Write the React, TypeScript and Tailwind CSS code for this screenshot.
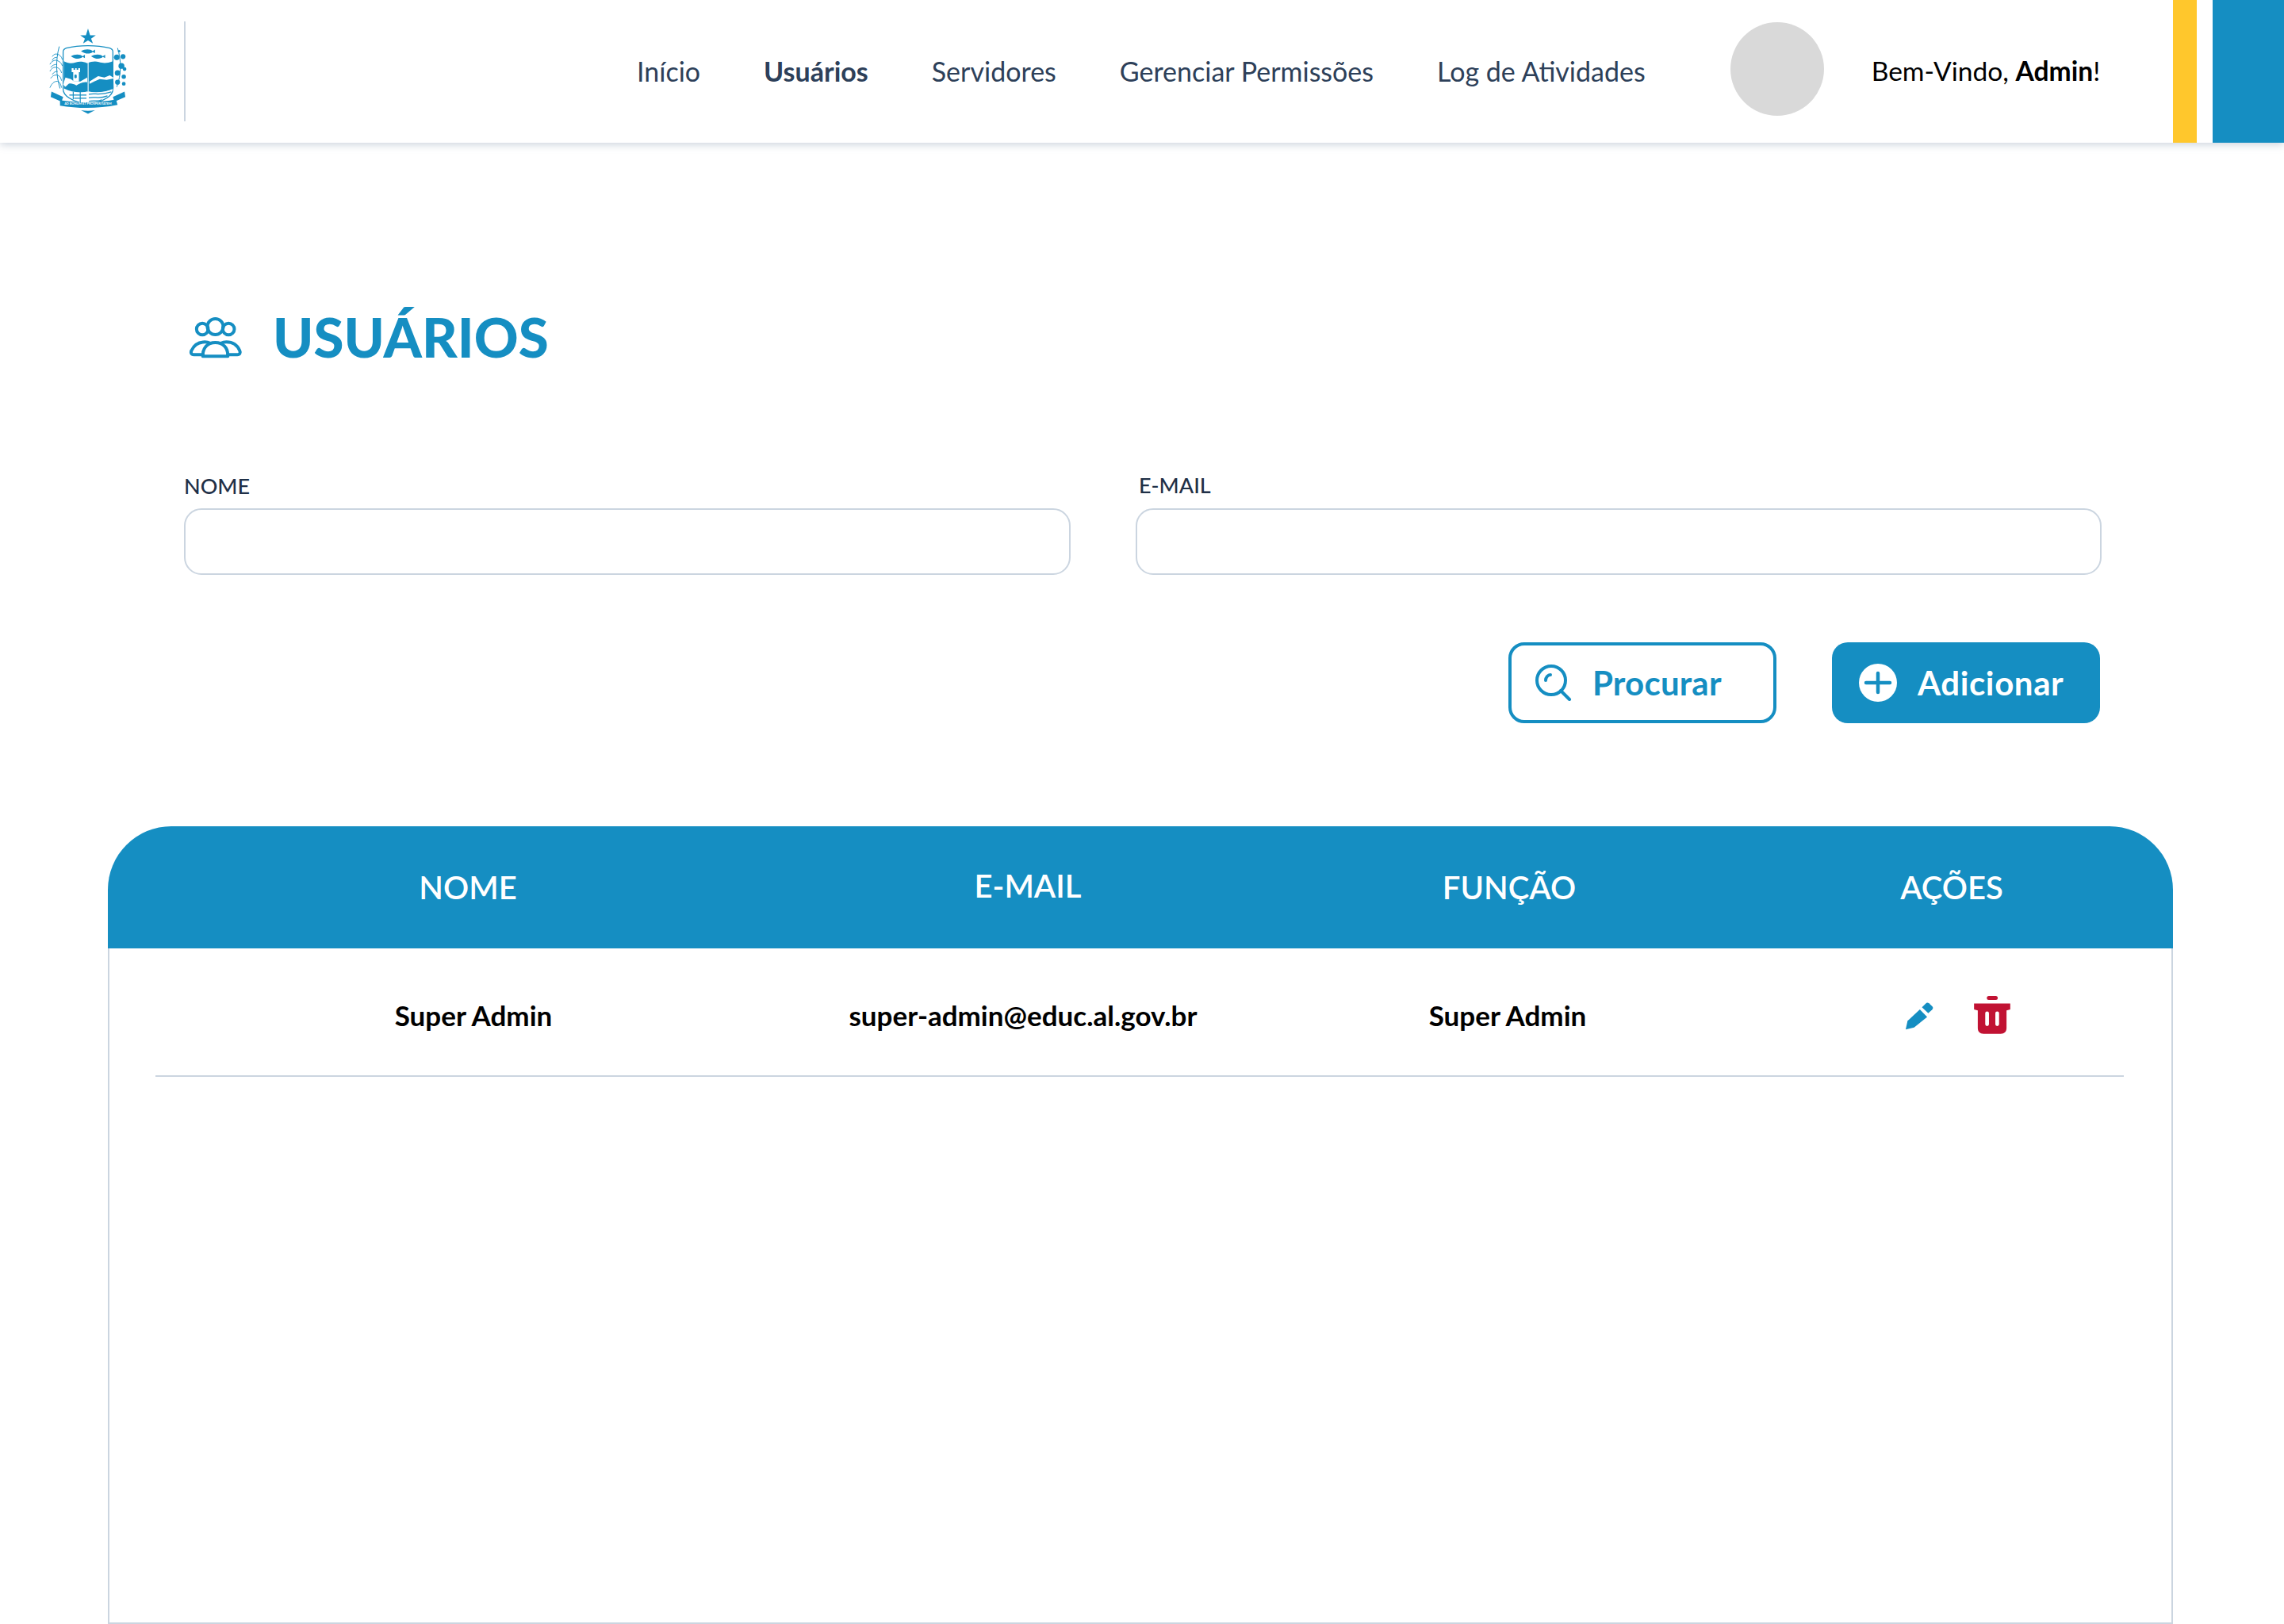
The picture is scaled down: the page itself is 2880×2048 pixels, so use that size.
const font = "font-['Lato','Liberation_Sans',sans-serif]";

function Crest() {
  return (
    <svg width="100" height="112" viewBox="58 34 102 112" fill="#158EC2" aria-hidden="true">
      {/* star */}
      <polygon points="110,35 112.700,43.500 120,43.500 114,48 116.300,54 110,50.300 103.700,54 106,48 100,43.500 107.300,43.500" />
      {/* shield outline */}
      <path d="M82 60c17-4 39-4 56 0 3 1 4 3 4 5v48c0 10-14 16-32 20-18-4-32-10-32-20V65c0-2 1-4 4-5z" fill="none" stroke="#158EC2" strokeWidth="1.300" />
      {/* fishes */}
      <path d="M101 64c5-3 12-3 15 0l3-2v4.500l-3-1.500c-3 3-10 3-15-1z" />
      <path d="M88 70.500c5-3 12-3 15 0l3-2V73l-3-1.500c-3 3-10 3-15-1z" />
      <path d="M114 70.500c5-3 12-3 15 0l3-2V73l-3-1.500c-3 3-10 3-15-1z" />
      {/* field */}
      <path d="M79 77c5 3 10 3 15 1.500s10-1 15 1c5-2 10-3 15-1.500s10 2 18-1l1 35c-10 5-22 6-33 4-11 2-21 1-31-4z" />
      {/* tower */}
      <path d="M89 86h2.400v2h2v-2h2v2h2v-2h2.400v5h-1.500v12h-7.300V91H89z" fill="#fff" />
      <rect x="92.500" y="94" width="3" height="5" rx="1.500" fill="#158EC2" />
      {/* hills */}
      <path d="M78 107l3-9 7 2 4 3 8 0 9-5v6c-6-1-10 2-14 4-4-2-7-3-10-2l-4 4z" fill="#fff" />
      <path d="M112 103l11-7 8 2 7-3 6 4-10 2-9-1-7 3-6 3z" fill="#fff" />
      {/* lower field */}
      <path d="M80 115c9 3 20 3 29 1v16c-12-3-25-8-29-17z" fill="#fff" />
      <path d="M111 116c11 2 22 1 31-3-3 9-17 15-31 19z" fill="#fff" />
      <path d="M111 119.500c8-2 13 2 29-3M111 124c8-2 13 2 24-2.500M111 128.500c8-2 10 1 17-2" fill="none" stroke="#158EC2" strokeWidth="1.300" />
      <path d="M86 120.500h22M92 124.500h16M91 116v10M100 116v14" fill="none" stroke="#158EC2" strokeWidth="1.200" />
      <rect x="109.600" y="77" width="1.100" height="55" fill="#fff" />
      {/* cane on the left */}
      <path d="M73 58c-5 18-4 38 1 54" fill="none" stroke="#158EC2" strokeWidth="1" />
      <path d="M71 68c-3-1-5 0-7 3M71 68c3 1 5 3 6 7M70 76c-3-1-7 1-9 5M70 76c3 1 6 3 7 7M70 85c-4-1-7 1-9 5M70 85c3 1 5 3 6 7M71 95c-4-1-7 1-9 4M71 95c3 1 4 3 5 7M72 103c-4-1-8 1-11 8M72 103c2 2 3 4 4 8M70 72c-3 0-5 1-6 4M70 81c-3 0-6 1-8 4M71 90c-3 0-5 1-7 4" fill="none" stroke="#158EC2" strokeWidth=".9" />
      {/* flowers on the right */}
      <path d="M148 60c5 16 5 34-1 50" fill="none" stroke="#158EC2" strokeWidth="1" />
      <circle cx="147" cy="72" r="3.600" />
      <circle cx="155" cy="71" r="3.200" />
      <circle cx="150" cy="64" r="1.600" />
      <circle cx="153" cy="83" r="3.800" />
      <circle cx="157" cy="87" r="2.400" />
      <circle cx="148" cy="92" r="3.600" />
      <circle cx="156" cy="97" r="2.800" />
      <circle cx="148" cy="104" r="3.200" />
      <circle cx="156" cy="106" r="2.400" />
      {/* ribbon */}
      <path d="M63 116l15 7-2 6-14-6z" />
      <path d="M157 116l-15 7 2 6 14-6z" />
      <path d="M74 127c23 4 49 4 72-1l2 7c-25 5-50 5-74 1z" />
      <text x="110" y="132.700" textAnchor="middle" fontSize="4" fill="#fff" fontFamily="Lato, sans-serif" fontWeight="700">AD BONUM ET PROSPERITATEM</text>
      <path d="M101 140c6 1 12 1 18 0l-9 4.500z" />
    </svg>
  );
}

function UsersIcon() {
  return (
    <svg width="68" height="55" viewBox="115 110 203 165" fill="none" stroke="#158EC2" strokeWidth="12" aria-hidden="true">
      <circle cx="215" cy="152" r="30" />
      <circle cx="166" cy="161" r="22" />
      <circle cx="265" cy="161" r="22" />
      <path d="M168 264c-2-32 18-52 47-52s49 20 47 52z" strokeLinejoin="round" />
      <path d="M168 258h-34c-10 0-13-8-9-16 8-18 24-32 50-32 10 0 16 2 20 4" strokeLinecap="round" />
      <path d="M262 258h36c10 0 13-8 9-16-8-18-24-32-50-32-10 0-16 2-20 4" strokeLinecap="round" />
    </svg>
  );
}

function SearchIcon() {
  return (
    <svg width="46" height="46" viewBox="0 0 46 46" fill="none" stroke="#158EC2" strokeWidth="4" strokeLinecap="round" aria-hidden="true">
      <circle cx="20" cy="20" r="18" />
      <path d="M13 20c0-4 3-7 6-7" />
      <path d="M32 33l11 11" />
    </svg>
  );
}

function PlusIcon() {
  return (
    <svg width="48" height="48" viewBox="0 0 48 48" aria-hidden="true">
      <circle cx="24" cy="24" r="24" fill="#fff" />
      <path d="M24 12v24M9 24h30" stroke="#158EC2" strokeWidth="4.500" strokeLinecap="round" />
    </svg>
  );
}

function PencilIcon() {
  return (
    <svg width="38" height="38" viewBox="180 130 115 115" fill="#158EC2" aria-hidden="true">
      <path d="M186 240l7-33 47-44 28 29-50 40z" />
      <path d="M248 155l14-14c4-4 9-4 13-1l12 11c4 4 4 9 0 13l-15 14z" />
    </svg>
  );
}

function TrashIcon() {
  return (
    <svg width="46" height="48" viewBox="448 100 136 143" fill="#C11233" className="-mt-[2px]" aria-hidden="true">
      <path d="M448 128h136v23l-14 3v66c0 14-8 22-22 22h-64c-14 0-22-8-22-22v-66l-14-3z" />
      <rect x="490" y="158" width="14" height="55" rx="7" fill="#fff" />
      <rect x="528" y="158" width="14" height="55" rx="7" fill="#fff" />
      <rect x="496" y="100" width="41" height="15" rx="7.500" />
    </svg>
  );
}

export default function App() {
  return (
    <div className={`flex h-[2048px] w-[2880px] flex-col overflow-hidden bg-white ${font}`}>
      {/* Top bar */}
      <header className="relative z-10 flex h-[180px] shrink-0 items-center bg-white pl-[60px] shadow-[0_2px_10px_rgba(120,140,165,0.4)]">
        <Crest />
        <div className="ml-[72px] h-[126px] w-[2px] bg-[#CBD5E0]" />
        <nav className="-mt-[2px] ml-[569px] flex items-center gap-[80px] text-[34px] text-[#2D4059]">
          <a>Início</a>
          <a className="font-bold">Usuários</a>
          <a>Servidores</a>
          <a>Gerenciar Permissões</a>
          <a>Log de Atividades</a>
        </nav>
        <div className="-mt-[6px] ml-[107px] h-[118px] w-[118px] rounded-full bg-[#D9D9D9]" />
        <p className="-mt-[2px] ml-[60px] text-[33.6px] text-black">
          Bem-Vindo, <b>Admin</b>!
        </p>
        <div className="absolute right-0 top-0 flex h-full gap-[20px]">
          <div className="h-full w-[30px] bg-[#FFC72C]" />
          <div className="h-full w-[90px] bg-[#158EC2]" />
        </div>
      </header>

      <main className="flex min-h-0 flex-1 flex-col">
        <div className="ml-[238px] mt-[199px] flex items-center gap-[38px]">
          <UsersIcon />
          <h1 className="text-[69px] font-black leading-[92px] text-[#158EC2]">USUÁRIOS</h1>
        </div>

        {/* Filters */}
        <div className="ml-[232px] mt-[124px] flex w-[2418px] gap-[82px]">
          <label className="w-[1118px]">
            <span className="mb-[10px] block text-[27px] font-medium leading-[36px] text-[#1F3047]">NOME</span>
            <input className="block h-[84px] w-full rounded-[22px] border-2 border-[#CBD5E0] bg-white" />
          </label>
          <label className="flex-1">
            <span className="-mt-[1px] mb-[11px] ml-[4px] block text-[27px] font-medium leading-[36px] text-[#1F3047]">E-MAIL</span>
            <input className="block h-[84px] w-full rounded-[22px] border-2 border-[#CBD5E0] bg-white" />
          </label>
        </div>

        <div className="ml-[1902px] mt-[85px] flex gap-[70px]">
          <button className="flex h-[102px] w-[338px] items-center gap-[26px] rounded-[20px] border-4 border-[#158EC2] pl-[30px] text-[42px] font-bold tracking-[0.2px] text-[#158EC2]">
            <SearchIcon />
            Procurar
          </button>
          <button className="flex h-[102px] w-[338px] items-center gap-[26px] rounded-[20px] bg-[#158EC2] pl-[34px] text-[42px] font-bold tracking-[0.6px] text-white">
            <PlusIcon />
            Adicionar
          </button>
        </div>

        {/* Users table */}
        <section className="ml-[136px] mt-[130px] flex w-[2604px] flex-1 flex-col rounded-t-[80px] border-b-2 border-[#CBD5E0]">
          <div className="grid h-[154px] shrink-0 grid-cols-[908px_504px_710px_406px] items-center rounded-t-[80px] bg-[#158EC2] text-center text-[40px] font-semibold text-white">
            <span>NOME</span>
            <span className="-mt-[4px]">E-MAIL</span>
            <span>FUNÇÃO</span>
            <span>AÇÕES</span>
          </div>
          <div className="flex-1 border-x-2 border-[#CBD5E0] pl-[58px] pr-[60px]">
            <div className="grid h-[162px] grid-cols-[802px_584px_638px_458px] items-center border-b-2 border-[#CBD5E0] pt-[9px] text-center text-[35px] font-bold text-black">
              <span>Super Admin</span>
              <span>super-admin@educ.al.gov.br</span>
              <span>Super Admin</span>
              <span className="flex items-center justify-end gap-[50px] pr-[143px]">
                <PencilIcon />
                <TrashIcon />
              </span>
            </div>
          </div>
        </section>
      </main>
    </div>
  );
}
